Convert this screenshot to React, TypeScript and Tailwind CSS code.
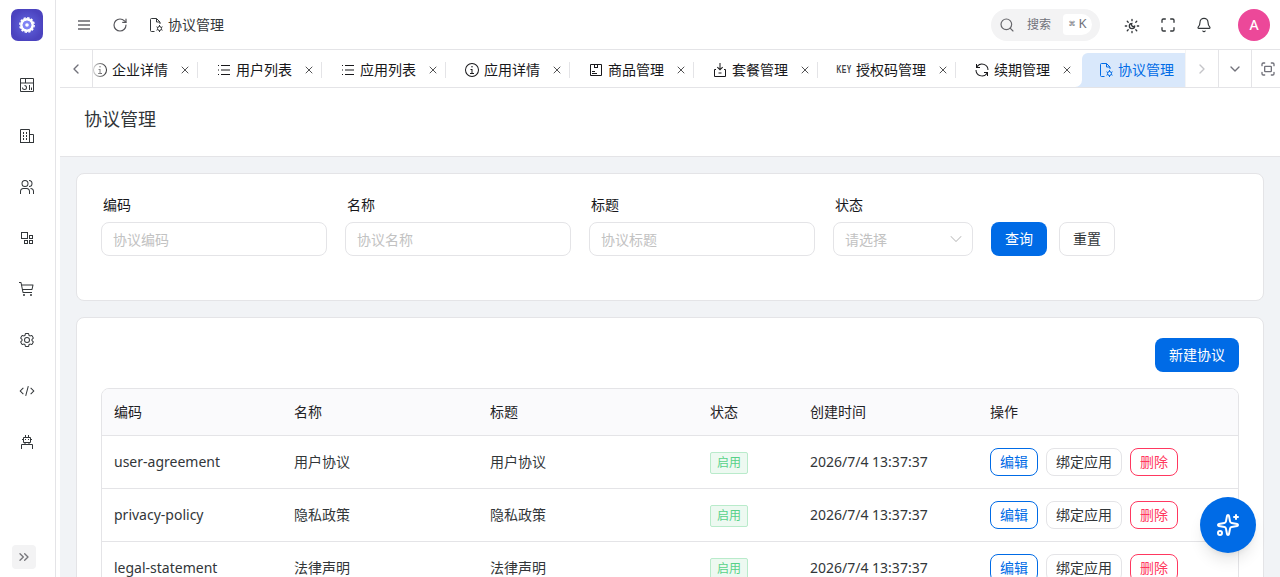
import { Bell, ChevronDown, ChevronLeft, ChevronRight, ChevronsRight, Fullscreen, Maximize, RotateCw, Search, Sparkles, X } from 'lucide-react';
import React from 'react';

// Solid glyphs on a 32 unit grid
const PATHS = {
  dashboard:
    'M24 21h2v5h-2zm-4-5h2v10h-2zm-9 10a5 5 0 0 1-5-5h2a3 3 0 1 0 3-3v-2a5 5 0 0 1 0 10M28 2H4a2 2 0 0 0-2 2v24a2 2 0 0 0 2 2h24a2 2 0 0 0 2-2V4a2 2 0 0 0-2-2m0 9H14V4h14ZM12 4v7H4V4ZM4 28V13h24v15Z',
  enterprise:
    'M8 8h2v4H8zm0 6h2v4H8zm6-6h2v4h-2zm0 6h2v4h-2zm-6 6h2v4H8zm6 0h2v4h-2zM30 14a2 2 0 0 0-2-2h-6V4a2 2 0 0 0-2-2H4a2 2 0 0 0-2 2v26h28ZM4 4h16v24H4Zm18 24V14h6v14Z',
  users:
    'M30 30h-2v-5a5 5 0 0 0-5-5v-2a7 7 0 0 1 7 7zm-8 0h-2v-5a5 5 0 0 0-5-5H9a5 5 0 0 0-5 5v5H2v-5a7 7 0 0 1 7-7h6a7 7 0 0 1 7 7zM20 2v2a5 5 0 0 1 0 10v2a7 7 0 0 0 0-14m-8 2a5 5 0 1 1-5 5a5 5 0 0 1 5-5m0-2a7 7 0 1 0 7 7a7 7 0 0 0-7-7',
  apps: 'M4 4v14h14V4Zm2 2h10v10H6ZM20 10v8h8v-8Zm2 2h4v4h-4ZM10 20v8h8v-8Zm2 2h4v4h-4ZM20 20v8h8v-8Zm2 2h4v4h-4Z',
  cart: 'M12 28a2 2 0 1 1-4 0a2 2 0 0 1 4 0M26 28a2 2 0 1 1-4 0a2 2 0 0 1 4 0M28 7H5.82L5 2.8A1 1 0 0 0 4 2H0v2h3.18L7 23.2a1 1 0 0 0 1 .8h18v-2H8.82L8 18h18a1 1 0 0 0 1-.78l2-9A1 1 0 0 0 28 7m-2.8 9H7.62l-1.4-7h20.53z',
  settings:
    'M27 16.76v-1.53l1.92-1.68A2 2 0 0 0 29.3 11l-2.36-4a2 2 0 0 0-1.73-1a2 2 0 0 0-.64.1l-2.43.82a11 11 0 0 0-1.31-.75l-.51-2.52a2 2 0 0 0-2-1.61h-4.68a2 2 0 0 0-2 1.61l-.51 2.52a11.5 11.5 0 0 0-1.32.75l-2.38-.86A2 2 0 0 0 6.79 6a2 2 0 0 0-1.73 1L2.7 11a2 2 0 0 0 .41 2.51L5 15.24v1.53l-1.89 1.68A2 2 0 0 0 2.7 21l2.36 4a2 2 0 0 0 1.73 1a2 2 0 0 0 .64-.1l2.43-.82a11 11 0 0 0 1.31.75l.51 2.52a2 2 0 0 0 2 1.61h4.72a2 2 0 0 0 2-1.61l.51-2.52a11.5 11.5 0 0 0 1.32-.75l2.42.82a2 2 0 0 0 .64.1a2 2 0 0 0 1.73-1l2.28-4a2 2 0 0 0-.41-2.51ZM25.21 24l-3.43-1.16a8.9 8.9 0 0 1-2.71 1.57L18.36 28h-4.72l-.71-3.55a9.4 9.4 0 0 1-2.7-1.57L6.79 24l-2.36-4l2.72-2.4a8.9 8.9 0 0 1 0-3.13L4.43 12l2.36-4l3.43 1.16a8.9 8.9 0 0 1 2.71-1.57L13.64 4h4.72l.71 3.55a9.4 9.4 0 0 1 2.7 1.57L25.21 8l2.36 4l-2.72 2.4a8.9 8.9 0 0 1 0 3.13L27.57 20ZM16 22a6 6 0 1 1 6-6a5.94 5.94 0 0 1-6 6m0-10a3.91 3.91 0 0 0-4 4a3.91 3.91 0 0 0 4 4a3.91 3.91 0 0 0 4-4a3.91 3.91 0 0 0-4-4',
  code: 'm31 16l-7 7l-1.41-1.41L28.17 16l-5.58-5.59L24 9zM1 16l7-7l1.41 1.41L3.83 16l5.58 5.59L8 23zm11.42 9.48L17.64 6l1.93.52L14.35 26z',
  bot: 'M18 10h2v2h-2zm-6 0h2v2h-2zM26 20h-5v-2h1a2 2 0 0 0 2-2v-4h2v-2h-2V8a2 2 0 0 0-2-2h-2V2h-2v4h-4V2h-2v4h-2a2 2 0 0 0-2 2v2H6v2h2v4a2 2 0 0 0 2 2h1v2H6a2 2 0 0 0-2 2v8h2v-8h20v8h2v-8a2 2 0 0 0-2-2M10 8h12v8H10Zm3 10h6v2h-6Z',
  info: 'M17 22v-8h-4v2h2v6h-3v2h8v-2zM16 8a1.5 1.5 0 1 0 1.5 1.5A1.5 1.5 0 0 0 16 8M16 30a14 14 0 1 1 14-14a14 14 0 0 1-14 14m0-26a12 12 0 1 0 12 12A12 12 0 0 0 16 4',
  list: 'M10 6h18v2H10zm0 18h18v2H10zm0-9h18v2H10zm-6 0h2v2H4zm0-9h2v2H4zm0 18h2v2H4z',
  product:
    'M8 18h6v2H8zm0 4h10v2H8zM26 4H6a2 2 0 0 0-2 2v20a2 2 0 0 0 2 2h20a2 2 0 0 0 2-2V6a2 2 0 0 0-2-2m-8 2v4h-4V6ZM6 26V6h6v6h8V6h6v20Z',
  plan: 'M13 21h6v2h-6zM26 14h-2v2h2v12H6V16h2v-2H6a2 2 0 0 0-2 2v12a2 2 0 0 0 2 2h20a2 2 0 0 0 2-2V16a2 2 0 0 0-2-2M17 13.200V2h-2v11.200l-3.600-3.600L10 11l6 6l6-6l-1.400-1.400Z',
  renew:
    'M12 10H6.78A11 11 0 0 1 27 16h2A13 13 0 0 0 6 7.68V4H4v8h8zm8 12h5.22A11 11 0 0 1 5 16H3a13 13 0 0 0 23 8.32V28h2v-8h-8z',
};

type IconName = keyof typeof PATHS | 'doc' | 'key';

const Icon: React.FC<{ name: IconName; className?: string }> = ({ name, className = 'size-4' }) => {
  if (name === 'key') {
    return (
      <span className="flex w-4 shrink-0 justify-center">
        <span className="scale-x-[0.68] font-['Liberation_Sans'] text-[10px] leading-4 font-bold tracking-[0.5px] text-[#3f3f46]">KEY</span>
      </span>
    );
  }
  if (name === 'doc') {
    return (
      <svg viewBox="0 0 32 32" className={`shrink-0 ${className}`} fill="none" stroke="currentColor" strokeWidth="2">
        <path d="M13 29H7a2 2 0 0 1-2-2V5a2 2 0 0 1 2-2h10l7 7v4M17 3v7h7" />
        <circle cx="23" cy="23" r="4" />
        <path d="M23 16v3M23 27v3M17 19.500l2.600 1.500M26.400 25l2.600 1.500M17 26.500l2.600-1.500M26.400 21l2.600-1.500" />
      </svg>
    );
  }
  return (
    <svg viewBox="0 0 32 32" className={`shrink-0 ${className}`} fill="currentColor">
      <path d={PATHS[name]} />
    </svg>
  );
};

// Eight rays around a crescent
const ThemeIcon = () => (
  <svg
    viewBox="0 0 24 24"
    className="mt-0.5 ml-6 size-4 shrink-0"
    fill="none"
    stroke="currentColor"
    strokeWidth="2"
    strokeLinecap="round"
    strokeLinejoin="round"
  >
    <path d="M12 8a2.830 2.830 0 0 0 4 4 4 4 0 1 1-4-4" />
    <path d="M12 2v2M12 20v2M4.900 4.900l1.400 1.400M17.700 17.700l1.400 1.400M2 12h2M20 12h2M6.300 17.700l-1.400 1.400M19.100 4.900l-1.400 1.400" />
  </svg>
);

const MENU: IconName[] = ['dashboard', 'enterprise', 'users', 'apps', 'cart', 'settings', 'code', 'bot'];

const TABS: { icon: IconName; label: string }[] = [
  { icon: 'info', label: '企业详情' },
  { icon: 'list', label: '用户列表' },
  { icon: 'list', label: '应用列表' },
  { icon: 'info', label: '应用详情' },
  { icon: 'product', label: '商品管理' },
  { icon: 'plan', label: '套餐管理' },
  { icon: 'key', label: '授权码管理' },
  { icon: 'renew', label: '续期管理' },
];

const FIELDS = [
  { label: '编码', placeholder: '协议编码' },
  { label: '名称', placeholder: '协议名称' },
  { label: '标题', placeholder: '协议标题' },
];

const ROWS = [
  { code: 'user-agreement', name: '用户协议' },
  { code: 'privacy-policy', name: '隐私政策' },
  { code: 'legal-statement', name: '法律声明' },
];

const COLS = 'grid grid-cols-[180px_196px_220px_100px_180px_1fr] items-center *:pl-3';

const Logo = () => (
  <svg viewBox="0 0 32 32" className="size-8">
    <defs>
      <radialGradient id="logo-bg">
        <stop offset="0" stopColor="#6366e0" />
        <stop offset="1" stopColor="#4b43bf" />
      </radialGradient>
    </defs>
    <rect width="32" height="32" rx="7" fill="url(#logo-bg)" />
    <circle cx="16" cy="16" r="7.200" fill="none" stroke="#fff" strokeWidth="1.400" strokeDasharray="2.300 1.470" />
    <circle cx="16" cy="16" r="5.600" fill="none" stroke="#fff" strokeWidth="2.600" />
    <circle cx="16" cy="16" r="4.300" fill="#8184f5" />
    <circle cx="16" cy="16" r="1.800" fill="#fff" />
  </svg>
);

const Sidebar = () => (
  <aside className="flex w-14 shrink-0 flex-col border-r border-[#e4e4e7] bg-white">
    <div className="flex h-[50px] items-center pl-[11px]">
      <Logo />
    </div>
    <nav className="flex flex-col pt-[9px] pr-px">
      {MENU.map((name) => (
        <div key={name} className="flex h-[51px] items-center justify-center">
          <Icon name={name} />
        </div>
      ))}
    </nav>
    <div className="mt-auto mb-2 ml-3 flex size-6 items-center justify-center rounded-sm bg-[#f3f3f4] text-[#76767b]">
      <ChevronsRight size={16} strokeWidth={2} />
    </div>
  </aside>
);

const Header = () => (
  <header className="flex h-[50px] shrink-0 items-center border-b border-[#e4e4e7] bg-white pl-4">
    <span className="flex w-4 flex-col items-center gap-0.5 pt-px">
      <span className="h-0.5 w-3 bg-[#8c8c90]" />
      <span className="h-0.5 w-3 bg-[#8c8c90]" />
      <span className="h-0.5 w-3 bg-[#8c8c90]" />
    </span>
    <RotateCw size={16} strokeWidth={1.75} className="ml-5 text-[#55555a]" />
    <div className="ml-5 flex items-center gap-1">
      <Icon name="doc" />
      <span className="text-sm">协议管理</span>
    </div>
    <div className="ml-auto flex h-8 w-[109px] items-center rounded-full bg-[#f3f3f4] pl-2 text-[#71717a]">
      <Search size={16} strokeWidth={1.75} className="text-[#66666b]" />
      <span className="ml-3 text-xs">搜索</span>
      <kbd className="ml-3 flex h-[21px] w-[29px] items-center justify-center gap-[3px] rounded-l-sm rounded-r-xl bg-white font-[inherit]">
        <span className="font-['DejaVu_Sans'] text-[7px]">⌘</span>
        <span className="-mt-0.5 text-[13px]">K</span>
      </kbd>
    </div>
    <ThemeIcon />
    <Maximize size={16} strokeWidth={2} className="ml-5" />
    <Bell size={16} strokeWidth={1.75} className="ml-5" />
    <div className="mr-[10px] ml-[26px] flex size-8 items-center justify-center rounded-full bg-[#ec4899] text-sm font-medium text-white">A</div>
  </header>
);

const TabBar = () => (
  <div className="flex h-[38px] shrink-0 border-b border-[#e4e4e7] bg-white">
    <div className="flex w-[33px] shrink-0 items-center justify-center border-r border-[#e4e4e7] text-[#71717a]">
      <ChevronLeft size={16} />
    </div>
    <div className="relative flex w-[1092px] shrink-0 justify-end overflow-hidden pt-[3px]">
      {TABS.map((tab) => (
        <div key={tab.label} className="flex shrink-0 items-center pl-[18px] text-[#18181b]">
          <Icon name={tab.icon} />
          <span className="ml-1 text-sm">{tab.label}</span>
          <X size={12} strokeWidth={1.5} className="ml-[11px]" />
          <span className={`ml-[6px] h-4 w-px ${tab.icon === 'renew' ? 'bg-transparent' : 'bg-[#e4e4e7]'}`} />
        </div>
      ))}
      <div className="relative flex w-[105px] shrink-0 items-center text-[#006be6]">
        <svg viewBox="0 0 7 7" className="absolute bottom-0 -left-[5px] size-[7px] fill-[#d9e8fb]">
          <path d="M7 0v7H0a7 7 0 0 0 7-7" />
        </svg>
        <div className="ml-[2px] flex h-full w-[103px] items-center rounded-tl-md bg-[#d9e8fb] pl-4">
          <Icon name="doc" />
          <span className="ml-1 text-sm">协议管理</span>
        </div>
      </div>
      <div className="absolute inset-y-0 left-0 w-4 bg-linear-to-r from-white/80 to-white/0" />
    </div>
    <div className="flex w-[33px] shrink-0 items-center justify-center border-l border-[#f4f4f5] text-[#c4c4c8]">
      <ChevronRight size={16} />
    </div>
    <div className="flex w-[33px] shrink-0 items-center justify-center border-l border-[#e4e4e7] text-[#71717a]">
      <ChevronDown size={16} />
    </div>
    <div className="flex w-[33px] shrink-0 items-center justify-center border-l border-[#e4e4e7] text-[#71717a]">
      <Fullscreen size={16} />
    </div>
  </div>
);

const FilterCard = () => (
  <section className="flex h-32 shrink-0 gap-[18px] rounded-lg border border-[#e4e4e7] bg-white px-6 pt-5">
    {FIELDS.map((field) => (
      <label key={field.label} className="flex w-[226px] flex-col">
        <span className="mb-1.5 pl-[2px] text-sm leading-[22px] text-[#18181b]">{field.label}</span>
        <span className="flex h-[34px] items-center rounded-lg border border-[#e4e4e7] px-[11px] pt-0.5 text-sm text-[#c2c2c2]">
          {field.placeholder}
        </span>
      </label>
    ))}
    <label className="flex w-[140px] flex-col">
      <span className="mb-1.5 pl-[2px] text-sm leading-[22px] text-[#18181b]">状态</span>
      <span className="flex h-[34px] items-center justify-between rounded-lg border border-[#e4e4e7] pr-1.5 pl-[11px] text-sm text-[#c2c2c2]">
        <span className="pt-0.5">请选择</span>
        <ChevronDown size={20} strokeWidth={1.25} />
      </span>
    </label>
    <div className="flex gap-3 pt-7">
      <button className="h-[34px] w-14 rounded-lg bg-[#006be6] text-sm text-white">查询</button>
      <button className="h-[34px] w-14 rounded-lg border border-[#e4e4e7] text-sm">重置</button>
    </div>
  </section>
);

const TableCard = () => (
  <section className="flex shrink-0 flex-col rounded-lg border border-[#e4e4e7] bg-white px-6 pt-5">
    <button className="h-[34px] w-[84px] self-end rounded-lg bg-[#006be6] text-sm text-white">新建协议</button>
    <div className="mt-4 overflow-hidden rounded-t-lg border border-[#e4e4e7] text-sm">
      <div className={`${COLS} h-[47px] border-b border-[#e4e4e7] bg-[#fafafc] text-[#1f2225]`}>
        <span>编码</span>
        <span>名称</span>
        <span>标题</span>
        <span>状态</span>
        <span>创建时间</span>
        <span>操作</span>
      </div>
      {ROWS.map((row) => (
        <div key={row.code} className={`${COLS} h-[53px] border-b border-[#e4e4e7]`}>
          <span>{row.code}</span>
          <span>{row.name}</span>
          <span>{row.name}</span>
          <span>
            <span className="relative top-px flex h-[22px] w-[38px] items-center justify-center rounded-xs border border-[#b9ebcb] bg-[#edf9f1] text-xs text-[#57d188]">
              启用
            </span>
          </span>
          <span>2026/7/4 13:37:37</span>
          <span className="flex gap-2">
            <button className="h-7 w-12 rounded-lg border border-[#006be6] text-[#006be6]">编辑</button>
            <button className="h-7 w-[76px] rounded-lg border border-[#e4e4e7]">绑定应用</button>
            <button className="h-7 w-12 rounded-lg border border-[#ff3860] text-[#ff3860]">删除</button>
          </span>
        </div>
      ))}
    </div>
  </section>
);

export default function App() {
  return (
    <div className="relative flex h-[577px] w-[1280px] overflow-hidden bg-white font-['Noto_Sans','Noto_Sans_CJK_SC',sans-serif] text-[#323639]">
      <Sidebar />
      <main className="ml-1 flex min-w-0 flex-1 flex-col overflow-hidden">
        <Header />
        <TabBar />
        <div className="h-[69px] shrink-0 border-b border-[#e4e4e7] bg-white px-6 pt-[17px] text-lg leading-7">协议管理</div>
        <div className="flex flex-1 flex-col gap-4 overflow-hidden bg-[#f1f3f6] p-4">
          <FilterCard />
          <TableCard />
        </div>
      </main>
      <button className="absolute right-6 bottom-6 flex size-14 items-center justify-center rounded-full bg-[#006be6] text-white shadow-lg">
        <Sparkles size={24} strokeWidth={2} />
      </button>
    </div>
  );
}
